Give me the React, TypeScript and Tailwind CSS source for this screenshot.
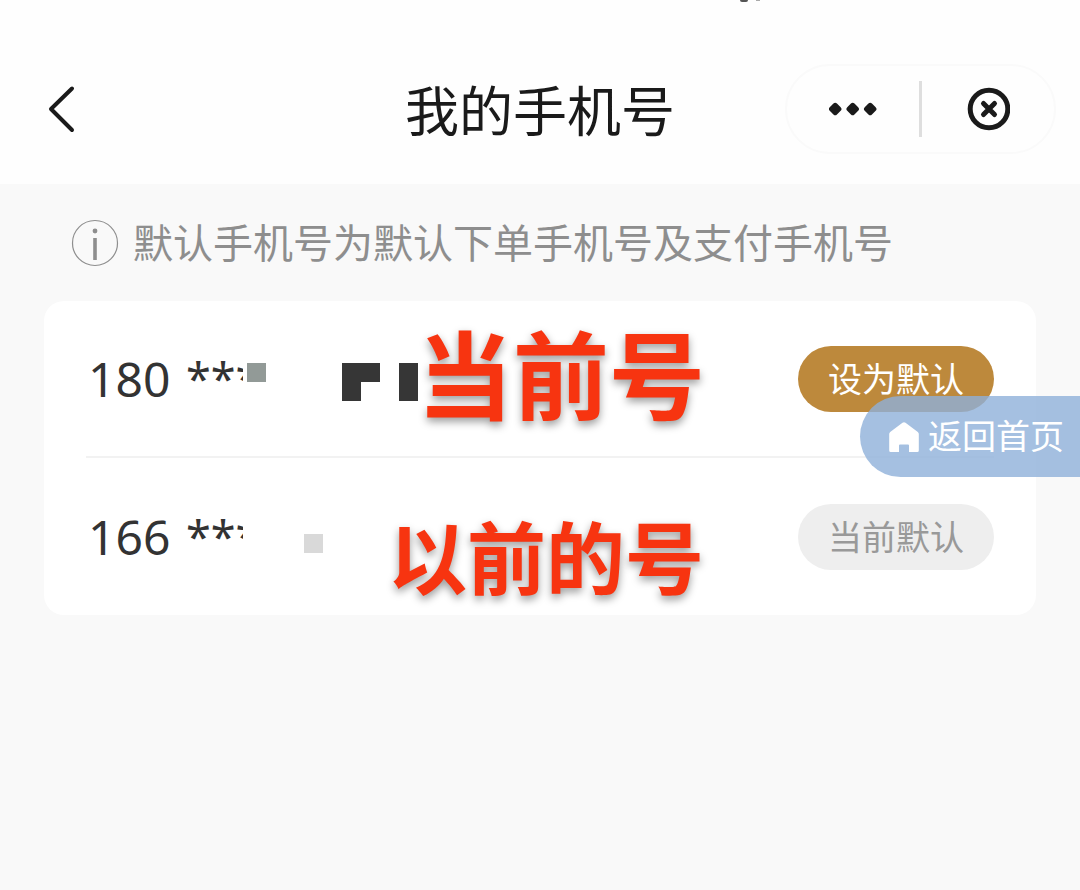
import type { ReactNode } from 'react'

const BackIcon = () => (
    <svg className="h-12 w-8" viewBox="0 0 32 48" fill="none" stroke="#1a1a1a" strokeWidth="4" strokeLinecap="round" strokeLinejoin="round">
        <path d="M25 3.5L4 24l21 21" />
    </svg>
)

const MoreIcon = () => (
    <svg className="h-4 w-12" viewBox="0 0 48 16" fill="#1a1a1a" stroke="#1a1a1a" strokeWidth="5" strokeLinejoin="round">
        <path d="M2.500 8l3.700-3.700L9.900 8l-3.700 3.700zM20 8l3.700-3.700L27.400 8l-3.700 3.700zM37.500 8l3.700-3.700L44.900 8l-3.700 3.700z" />
    </svg>
)

const CloseIcon = () => (
    <svg className="h-11 w-11" viewBox="0 0 44 44" fill="none" stroke="#1a1a1a" strokeWidth="5" strokeLinecap="round">
        <circle cx="23" cy="22" r="18.8" />
        <path d="M17.500 16.500l11 11M28.500 16.500l-11 11" />
    </svg>
)

const InfoIcon = () => (
    <svg className="h-12 w-12 shrink-0" viewBox="0 0 48 48" fill="none" stroke="#8e8e8e">
        <circle cx="24" cy="24" r="22.5" strokeWidth="1.2" />
        <path d="M24 19v22" strokeWidth="3.6" />
        <circle cx="24" cy="12" r="2.4" fill="#8e8e8e" stroke="none" />
    </svg>
)

const HomeIcon = () => (
    <svg className="h-8 w-8 shrink-0" viewBox="0 0 32 32" fill="#fff">
        <path d="M14.500 1.800a2.500 2.500 0 0 1 3 0L29.800 11a2.500 2.500 0 0 1 1 2V29.500a1.500 1.500 0 0 1-1.500 1.500H21v-6.500a1 1 0 0 0-1-1h-8a1 1 0 0 0-1 1V31H2.700a1.500 1.500 0 0 1-1.500-1.500V13a2.500 2.500 0 0 1 1-2z" />
    </svg>
)

type RowProps = {
    prefix: string
    mosaic: ReactNode
    note: ReactNode
    button: ReactNode
}

const PhoneRow = ({ prefix, mosaic, note, button }: RowProps) => (
    <li className="relative flex h-[157px] items-center justify-between">
        <div className="flex items-center pt-0.5 text-[#333]">
            <span className="w-[100px] pb-0.5 pl-0.5 font-['Noto_Sans','Noto_Sans_CJK_SC',sans-serif] text-[48px] leading-none">{prefix}</span>
            <span className="w-[56px] pb-0.5 font-['Noto_Sans','Noto_Sans_CJK_SC',sans-serif] text-[45px] leading-none">***</span>
            {mosaic}
        </div>
        {note}
        {button}
    </li>
)

const App = () => {
    return (
        <div className="min-h-screen bg-[#f9f9f9] font-['Noto_Sans_CJK_SC',sans-serif]">
            <header className="relative flex h-[184px] items-center justify-between bg-[#fefefe] pt-[34px] pr-6 pl-[47px]">
                <div className="absolute top-0 left-[740px] flex gap-2">
                    <span className="h-0.5 w-2 rounded-b bg-[#555]"></span>
                    <span className="h-px w-1 bg-[#aaa]"></span>
                </div>
                <button aria-label="返回"><BackIcon /></button>
                <h1 className="absolute inset-x-0 text-center text-[54px] leading-none text-[#1a1a1a]">我的手机号</h1>
                <div className="relative flex h-[90px] items-center rounded-full border-2 border-[#fafafa]">
                    <button aria-label="更多" className="flex w-[132px] justify-center"><MoreIcon /></button>
                    <span className="h-14 w-[3px] bg-[#dedede]"></span>
                    <button aria-label="关闭" className="flex w-[132px] justify-center"><CloseIcon /></button>
                </div>
            </header>

            <main className="px-11">
                <p className="flex h-[117px] items-center gap-[14px] pl-[27px] text-[40px] leading-none text-[#8e8e8e]">
                    <InfoIcon />
                    <span className="pb-1">默认手机号为默认下单手机号及支付手机号</span>
                </p>

                <section className="relative">
                    <ul className="divide-y-2 divide-[#f2f2f2] rounded-[20px] bg-white px-[42px]">
                        <PhoneRow
                            prefix="180"
                            mosaic={
                                <svg className="relative h-12 w-44" viewBox="0 0 176 48">
                                    <path d="M1 0h30v48H1z" fill="#fff" />
                                    <path d="M5 7h19v19H5z" fill="#929a97" />
                                    <path d="M100 7h38v19h-19v19h-19zM157 7h19v38h-19z" fill="#363636" />
                                </svg>
                            }
                            note={<strong className="absolute top-[22px] left-[331px] text-8xl leading-none font-bold text-[#f73410] [text-shadow:0_4px_8px_#0006]">当前号</strong>}
                            button={<button className="h-[66px] w-[196px] rounded-full bg-[#bd893c] pb-0.5 text-[34px] leading-none text-white">设为默认</button>}
                        />
                        <PhoneRow
                            prefix="166"
                            mosaic={
                                <svg className="relative h-12 w-44" viewBox="0 0 176 48">
                                    <path d="M1 0h30v48H1z" fill="#fff" />
                                    <path d="M62 20h19v19H62z" fill="#d9d9d9" />
                                </svg>
                            }
                            note={<strong className="absolute top-[57px] left-[302px] text-[79px] leading-none font-bold text-[#f73410] [text-shadow:0_4px_8px_#0006]">以前的号</strong>}
                            button={<button disabled className="h-[66px] w-[196px] rounded-full bg-[#eee] pb-0.5 text-[34px] leading-none text-[#999]">当前默认</button>}
                        />
                    </ul>
                    <a href="#" className="absolute top-[95px] -right-11 flex h-[81px] w-[220px] items-center gap-2 rounded-l-full bg-[#8fb0d9]/80 pl-7 text-[34px] leading-none text-white">
                        <HomeIcon />
                        <span className="pb-1 whitespace-nowrap">返回首页</span>
                    </a>
                </section>
            </main>
        </div>
    )
}

export default App
